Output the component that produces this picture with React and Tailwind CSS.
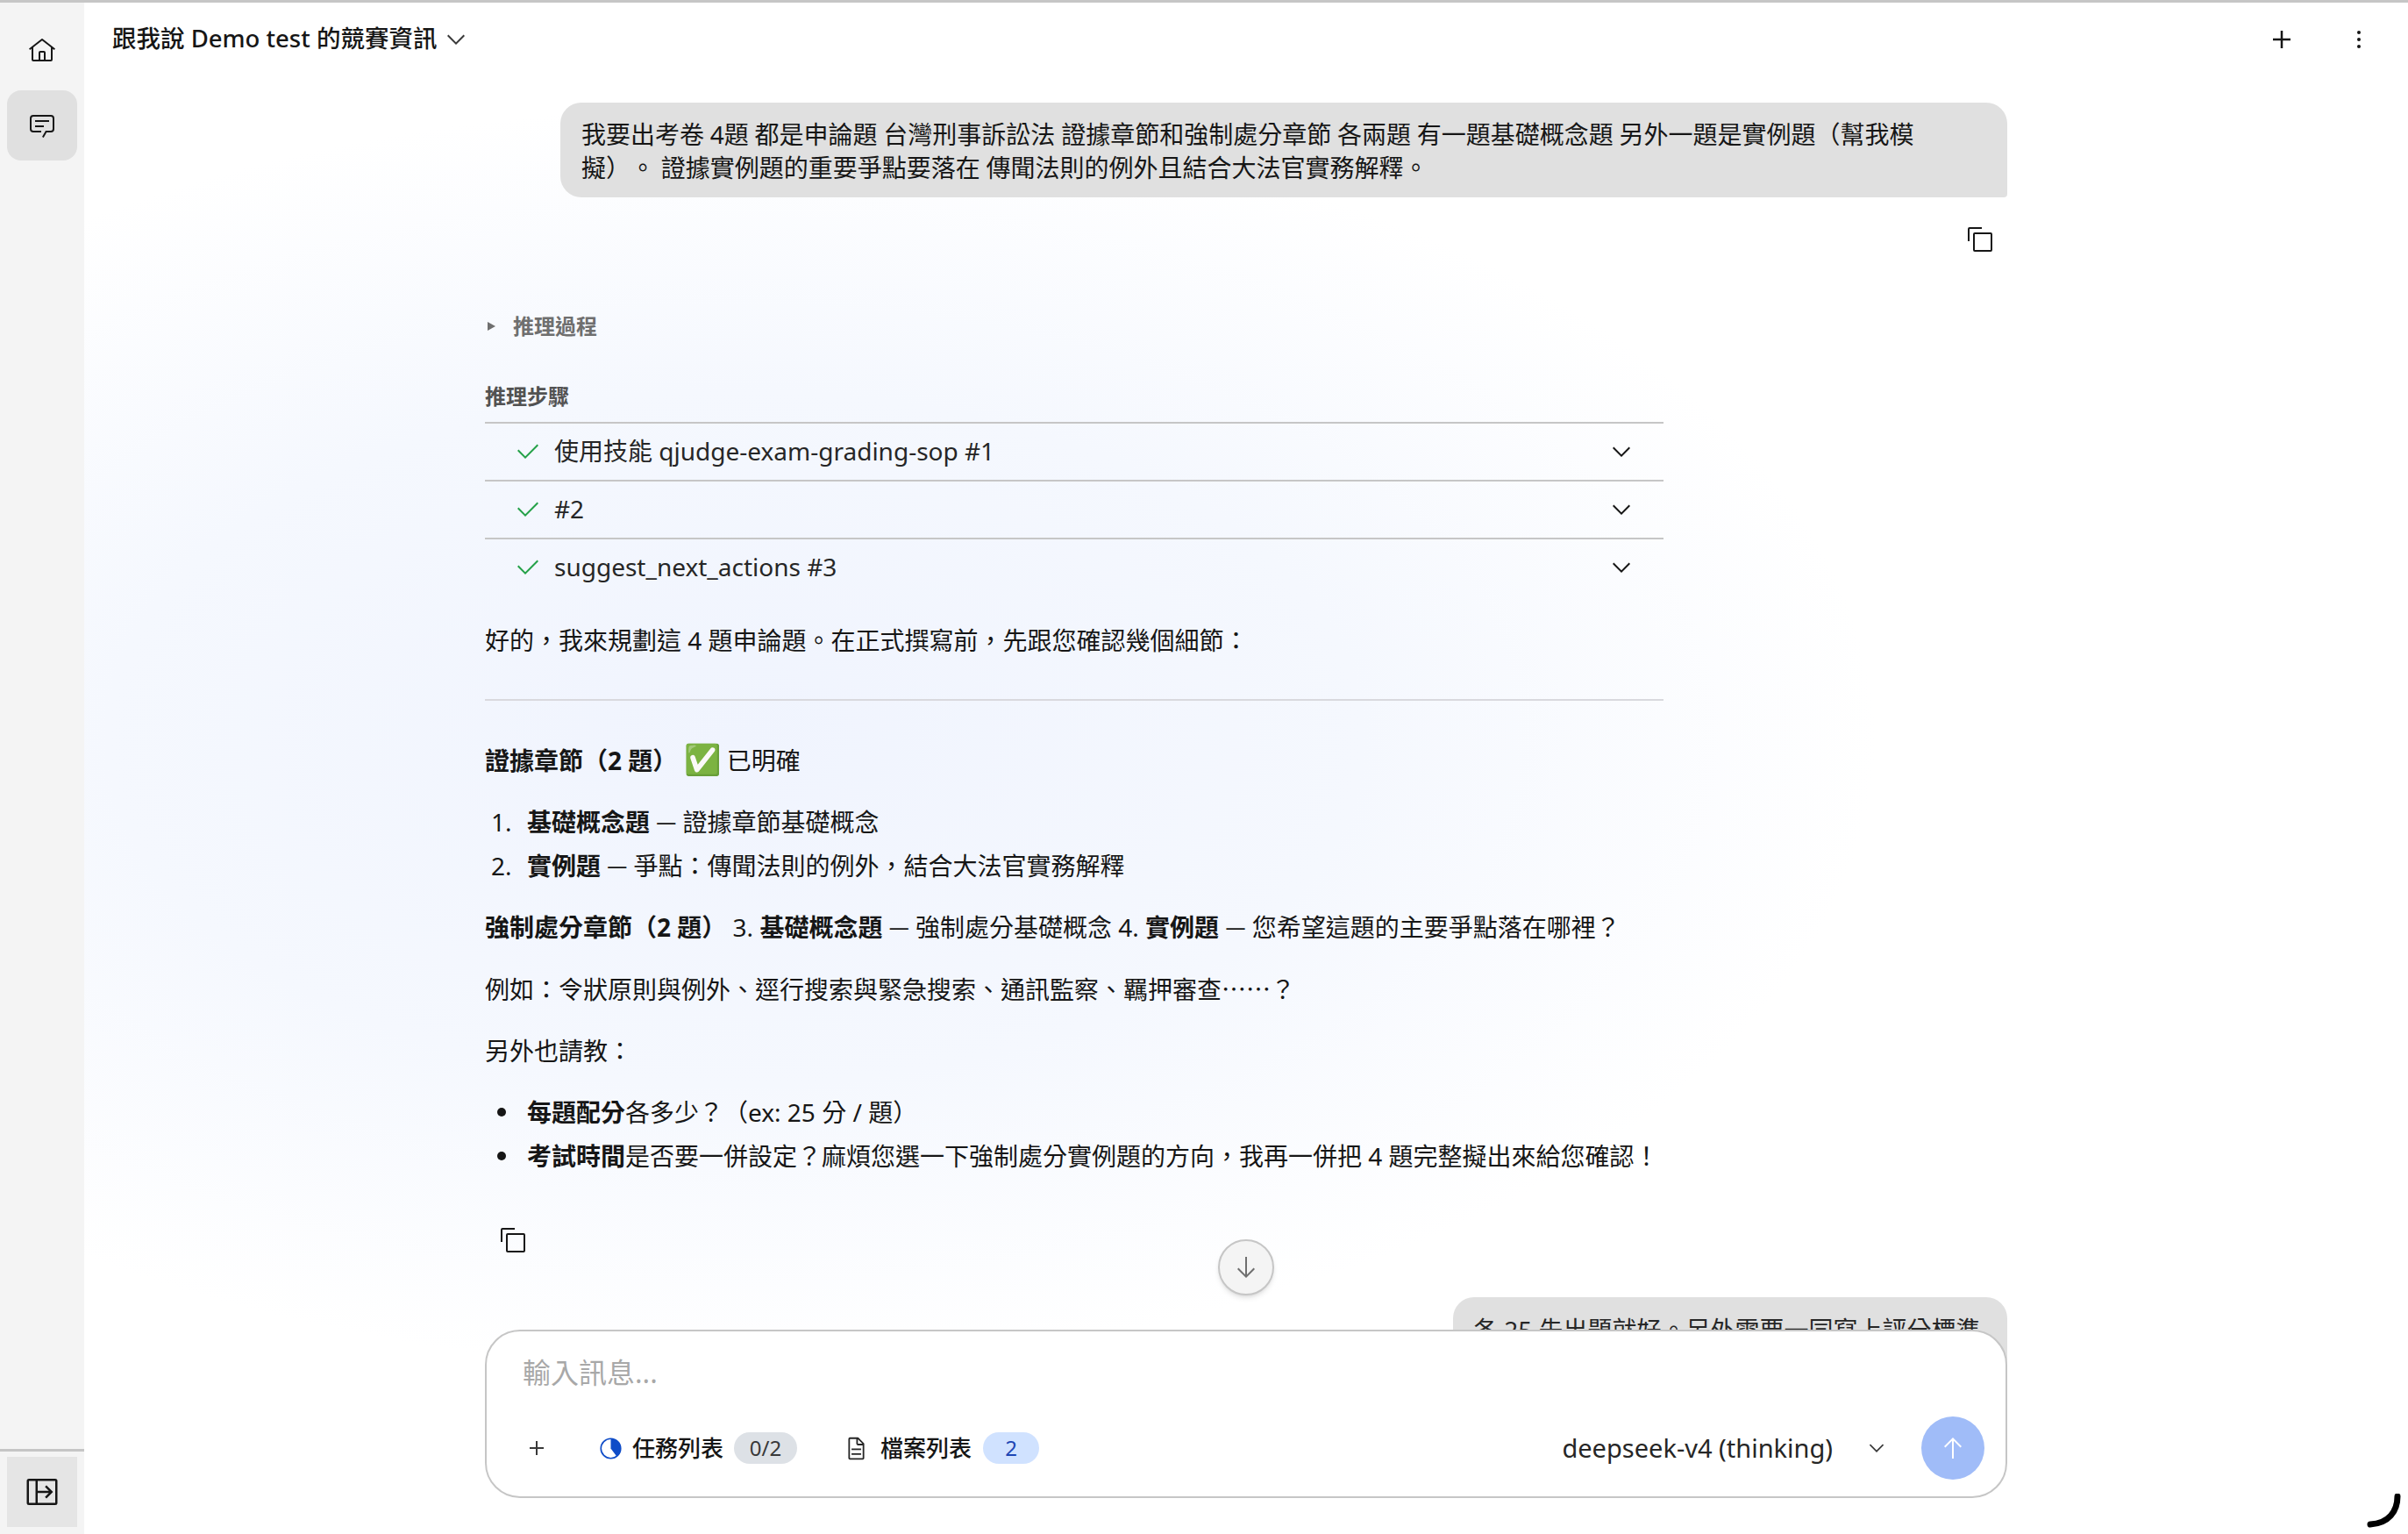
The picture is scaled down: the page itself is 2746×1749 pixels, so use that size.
import React from 'react'

const Carbon = ({ d, size = 32, className = '' }) => (
  <svg viewBox="0 0 32 32" width={size} height={size} fill="currentColor" className={`shrink-0 ${className}`}>
    {d.map((p) => <path key={p} d={p} />)}
  </svg>
)

const HOME = ['M16.6123,2.2138a1.01,1.01,0,0,0-1.2427,0L1,13.4194l1.2427,1.5717L4,13.6209V26a2.0041,2.0041,0,0,0,2,2H26a2.0037,2.0037,0,0,0,2-2V13.63L29.7573,15,31,13.4282ZM18,26H14V18h4Zm2,0V18a2.0023,2.0023,0,0,0-2-2H14a2.002,2.002,0,0,0-2,2v8H6V12.0615l10-7.79,10,7.8005V26Z']
const CHAT = ['M17.74,30,16,29l4-7h6a2,2,0,0,0,2-2V8a2,2,0,0,0-2-2H6A2,2,0,0,0,4,8V20a2,2,0,0,0,2,2h9v2H6a4,4,0,0,1-4-4V8A4,4,0,0,1,6,4H26a4,4,0,0,1,4,4V20a4,4,0,0,1-4,4H21.16Z', 'M8 10H24V12H8z', 'M8 16H18V18H8z']
const PANEL = ['M28,4H4A2,2,0,0,0,2,6V26a2,2,0,0,0,2,2H28a2,2,0,0,0,2-2V6A2,2,0,0,0,28,4ZM10,26H4V6h6ZM28,26H12V17h10.17l-3.58,3.59L20,22l6-6-6-6-1.41,1.41L22.17,15H12V6H28Z']
const CHEVRON = ['M16 22 6 12 7.4 10.6 16 19.2 24.6 10.6 26 12 16 22z']
const ADD = ['M17 15V8H15v7H8v2h7v7h2V17h7V15Z']
const COPY = ['M28,10V28H10V10H28m0-2H10a2,2,0,0,0-2,2V28a2,2,0,0,0,2,2H28a2,2,0,0,0,2-2V10a2,2,0,0,0-2-2Z', 'M4,18H2V4A2,2,0,0,1,4,2H18V4H4Z']
const CHECK = ['M13 24 4 15 5.414 13.586 13 21.171 26.586 7.586 28 9 13 24z']
const DOC = ['M25.7,9.3l-7-7A.9087.9087,0,0,0,18,2H8A2.0058,2.0058,0,0,0,6,4V28a2.0058,2.0058,0,0,0,2,2H24a2.0058,2.0058,0,0,0,2-2V10A.9092.9092,0,0,0,25.7,9.3ZM18,4.4,23.6,10H18ZM24,28H8V4h8v6a2.0058,2.0058,0,0,0,2,2h6Z', 'M10 22H22V24H10z', 'M10 16H22V18H10z']
const ARROW_UP = ['M16 4 6 14 7.41 15.41 15 7.83 15 28 17 28 17 7.83 24.59 15.41 26 14 16 4z']
const ARROW_DOWN = ['M24.59 16.59 17 24.17 17 4 15 4 15 24.17 7.41 16.59 6 18 16 28 26 18 24.59 16.59z']
const OVERFLOW = ['M16 6a2 2 0 1 0 0 4 2 2 0 1 0 0-4z', 'M16 14a2 2 0 1 0 0 4 2 2 0 1 0 0-4z', 'M16 22a2 2 0 1 0 0 4 2 2 0 1 0 0-4z']

const STEPS = ['使用技能 qjudge-exam-grading-sop #1', '#2', 'suggest_next_actions #3']

const Sidebar = () => (
  <aside className="w-[96px] shrink-0 flex flex-col bg-[#f4f4f4] text-[#161616]">
    <div className="flex-1 flex flex-col items-center pt-[15px] gap-[5px]">
      <button className="w-[80px] h-[80px] flex items-center justify-center">
        <Carbon d={HOME} />
      </button>
      <button className="w-[80px] h-[80px] flex items-center justify-center rounded-2xl bg-[#e0e0e0]">
        <Carbon d={CHAT} />
      </button>
    </div>
    <div className="border-t-[3px] border-[#c6c6c6] h-[97px] pt-[6px] flex justify-center">
      <button className="w-[80px] h-[80px] flex items-center justify-center bg-[#e5e5e5]">
        <Carbon d={PANEL} size={40} />
      </button>
    </div>
  </aside>
)

const Header = () => (
  <header className="h-[114px] shrink-0 flex justify-between pl-[32px] pr-[40px] pt-[24px] text-[#161616]">
    <div className="flex items-center h-[36px] gap-[6px]">
      <span className="text-[27.5px] font-medium pb-[2px]">跟我說 Demo test 的競賽資訊</span>
      <Carbon d={CHEVRON} className="text-[#393939]" />
    </div>
    <div className="flex items-center h-[36px] gap-[52px]">
      <Carbon d={ADD} size={40} />
      <Carbon d={OVERFLOW} />
    </div>
  </header>
)

const Steps = () => (
  <div className="mt-[44px]">
    <div className="text-[24px] leading-[36px] font-semibold text-[#525252] pb-[11px]">推理步驟</div>
    {STEPS.map((s) => (
      <div key={s} className="h-[66px] flex items-center border-t-2 border-[#c6c6c6] pl-[33px] pr-[32px]">
        <Carbon d={CHECK} className="text-[#24a148]" />
        <span className="ml-[14px] flex-1 text-[28px] text-[#262626] pb-[3px]">{s}</span>
        <Carbon d={CHEVRON} className="text-[#161616]" />
      </div>
    ))}
  </div>
)

const Composer = () => (
  <div className="absolute left-0 right-0 top-[1399px] h-[192px] rounded-[40px] border-2 border-[#c6c6c6] bg-white">
    <div className="pl-[41px] pt-[27px] text-[32px] leading-[40px] text-[#a8a8a8]">輸入訊息...</div>
    <div className="mt-[30px] h-[72px] flex items-center pl-[41px] pr-[24px]">
      <Carbon d={ADD} size={32} className="text-[#393939]" />
      <svg viewBox="0 0 24 24" width="25" height="25" className="ml-[56px] text-[#0f4cc8]">
        <circle cx="12" cy="12" r="10.8" fill="none" stroke="currentColor" strokeWidth="1.6" />
        <path d="M12 1.2A10.8 10.8 0 0 1 22.8 12 10.8 10.8 0 0 1 18.5 20.6L12 12Z" fill="currentColor" />
      </svg>
      <span className="ml-[12px] text-[26px] font-medium text-[#161616]">任務列表</span>
      <span className="ml-[12px] w-[72px] h-[36px] rounded-full bg-[#dde1e6] text-[#393939] text-[24px] flex items-center justify-center">0/2</span>
      <Carbon d={DOC} size={29} className="ml-[53px] text-[#262626]" />
      <span className="ml-[13px] text-[26px] font-medium text-[#161616]">檔案列表</span>
      <span className="ml-[13px] w-[64px] h-[36px] rounded-full bg-[#d0e2ff] text-[#1e46b4] text-[24px] flex items-center justify-center">2</span>
      <span className="ml-auto text-[29px] text-[#262626]">deepseek-v4 (thinking)</span>
      <Carbon d={CHEVRON} size={26} className="ml-[37px] text-[#393939]" />
      <button className="ml-[38px] w-[72px] h-[72px] rounded-full bg-[#a0bcf8] flex items-center justify-center text-white">
        <Carbon d={ARROW_UP} size={32} />
      </button>
    </div>
  </div>
)

const Dot = () => <span className="ml-[14px] mr-[24px] w-[10px] h-[10px] shrink-0 rounded-full bg-[#161616] self-center" />
const Dash = () => <span className="relative -top-[3px] text-[23px] leading-none">—</span>

export default function App() {
  return (
    <div
      className="w-[2746px] h-[1749px] overflow-hidden flex border-t-[3px] border-[#c6c6c6] bg-white"
      style={{ fontFamily: '"Noto Sans", "Noto Sans CJK TC", sans-serif' }}
    >
      <Sidebar />
      <main className="flex-1 min-w-0 flex flex-col relative bg-[radial-gradient(ellipse_1300px_720px_at_28%_48%,#f0f4fe_0%,#f5f8fe_55%,#ffffff_100%)]">
        <Header />
        <div className="relative mx-auto w-[1736px] flex-1 text-[28px] text-[#161616]">
          <div className="flex justify-end">
            <div className="w-[1650px] rounded-[24px] rounded-br-[4px] bg-[#e0e0e0] pl-[24px] pr-[80px] pt-[17px] pb-[15px] leading-[38px] [text-spacing-trim:space-all] [word-spacing:-0.5px]">
              我要出考卷 4題 都是申論題 台灣刑事訴訟法 證據章節和強制處分章節 各兩題 有一題基礎概念題 另外一題是實例題（幫我模擬）。 證據實例題的重要爭點要落在 傳聞法則的例外且結合大法官實務解釋。
            </div>
          </div>
          <div className="flex justify-end pr-[15px] pt-[32px]">
            <Carbon d={COPY} />
          </div>

          <div className="mt-[65px] w-[1344px]">
            <div className="flex items-center h-[36px] pl-[3px] text-[24px] font-semibold text-[#6f6f6f]">
              <span className="w-0 h-0 border-y-[5px] border-y-transparent border-l-[9px] border-l-[#6f6f6f]" />
              <span className="ml-[20px]">推理過程</span>
            </div>
            <Steps />
            <p className="mt-[26px] leading-[50px]">好的，我來規劃這 4 題申論題。在正式撰寫前，先跟您確認幾個細節：</p>
            <hr className="mt-[42px] border-t-2 border-[#d9d9de]" />
            <p className="mt-[43px] leading-[50px]"><strong>證據章節（2 題）</strong> <span className="text-[34px] leading-none">✅</span> 已明確</p>
            <ol className="mt-[20px] leading-[50px]">
              <li className="flex"><span className="w-[48px] pl-[7px]">1.</span><span><strong>基礎概念題</strong> <Dash /> 證據章節基礎概念</span></li>
              <li className="flex"><span className="w-[48px] pl-[7px]">2.</span><span><strong>實例題</strong> <Dash /> 爭點：傳聞法則的例外，結合大法官實務解釋</span></li>
            </ol>
            <p className="mt-[20px] leading-[50px]"><strong>強制處分章節（2 題）</strong> 3. <strong>基礎概念題</strong> <Dash /> 強制處分基礎概念 4. <strong>實例題</strong> <Dash /> 您希望這題的主要爭點落在哪裡？</p>
            <p className="mt-[20px] leading-[50px]">例如：令狀原則與例外、逕行搜索與緊急搜索、通訊監察、羈押審查<span className="font-['Noto_Sans_CJK_TC']">……</span>？</p>
            <p className="mt-[20px] leading-[50px]">另外也請教：</p>
            <ul className="mt-[20px] leading-[50px]">
              <li className="flex"><Dot /><span><strong>每題配分</strong>各多少？（ex: 25 分 / 題）</span></li>
              <li className="flex"><Dot /><span><strong>考試時間</strong>是否要一併設定？麻煩您選一下強制處分實例題的方向，我再一併把 4 題完整擬出來給您確認！</span></li>
            </ul>
            <div className="mt-[55px] pl-[16px]">
              <Carbon d={COPY} />
            </div>
          </div>

          {/* next user message, cut off by the composer */}
          <div className="absolute right-0 top-[1362px] w-[632px] h-[80px] overflow-hidden rounded-t-[24px] bg-[#e0e0e0] pl-[23px] pt-[18px] text-[28px] leading-[38px] text-[#262626]">
            各 25 先出題就好。另外需要一同寫上評分標準
          </div>
          <button className="absolute left-[836px] top-[1296px] w-[64px] h-[64px] rounded-full border-2 border-[#c6c6c6] bg-[#f4f4f4] shadow-md flex items-center justify-center text-[#6f6f6f]">
            <Carbon d={ARROW_DOWN} />
          </button>
          <Composer />
        </div>
        {/* loading spinner */}
        <svg viewBox="0 0 40 40" width="40" height="40" className="absolute right-[8px] bottom-[6px]" fill="none">
          <path d="M36 3C36 20 26 34 5 35" stroke="#000" strokeWidth="7" strokeLinecap="round" />
        </svg>
      </main>
    </div>
  )
}
